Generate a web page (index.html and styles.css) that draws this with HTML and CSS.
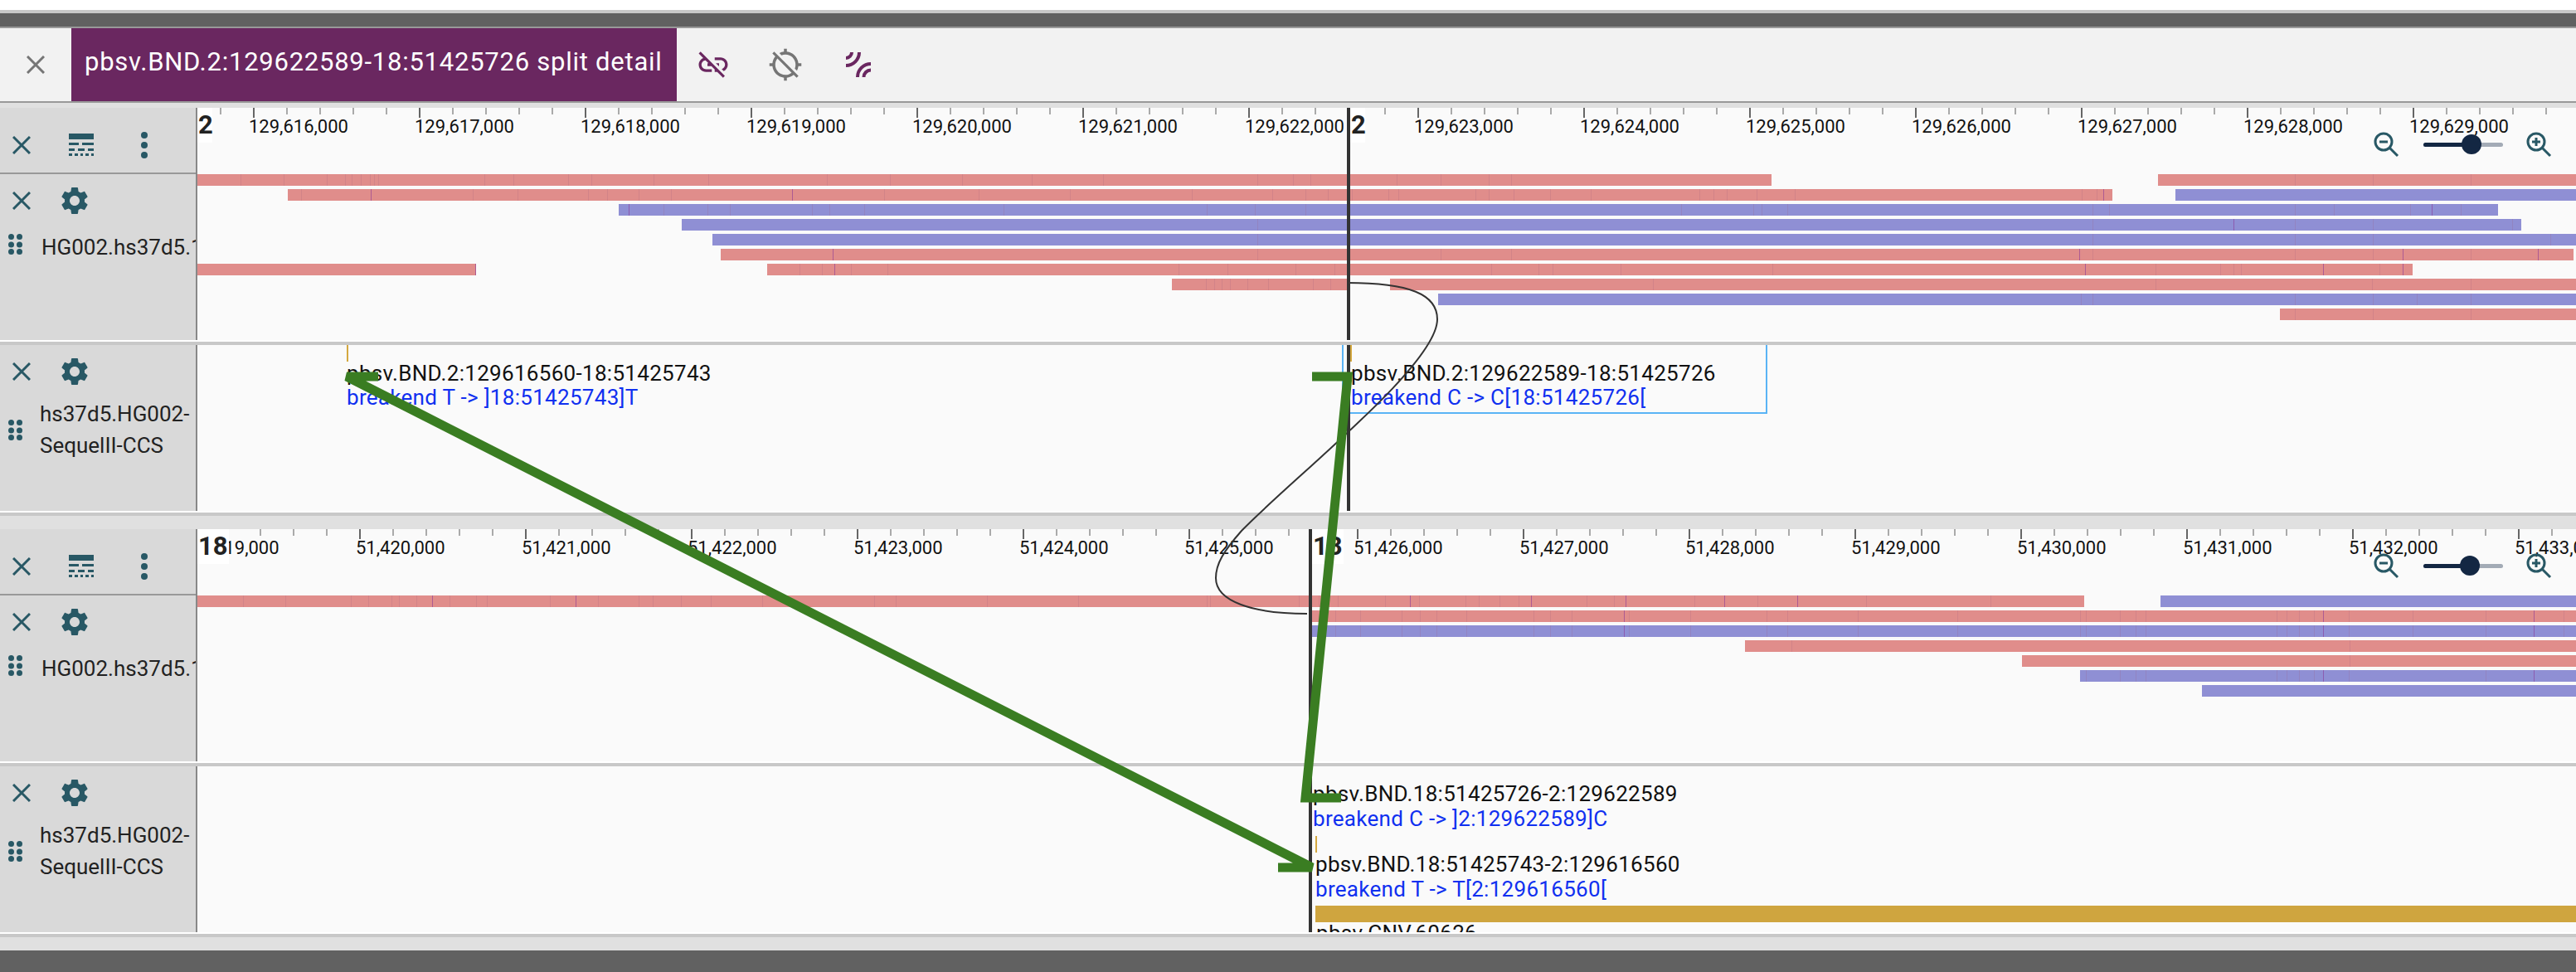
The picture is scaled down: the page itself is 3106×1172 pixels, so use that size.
FILE: index.html
```html
<!DOCTYPE html>
<html lang="en">
<head>
<meta charset="utf-8">
<title>pbsv.BND split detail</title>
<link rel="stylesheet" href="styles.css">
</head>
<body>
<div class="page">
  <div class="topbar"></div>
  <header class="tabbar">
    <button class="tab-close"><svg class="ico-close" viewBox="0 0 22 22"><path d="M1 1l20 20M21 1L1 21"/></svg></button>
    <div class="tab-title">pbsv.BND.2:129622589-18:51425726 split detail</div>
    <svg class="tab-ico tab-link" viewBox="0 0 24 24"><path d="M17 7h-4v1.9h4c1.71 0 3.1 1.39 3.1 3.1 0 1.43-.98 2.63-2.31 2.98l1.46 1.46C20.88 15.61 22 13.95 22 12c0-2.76-2.24-5-5-5zm-1 4h-2.19l2 2H16zM2 4.27l3.11 3.11C3.29 8.12 2 9.91 2 12c0 2.76 2.24 5 5 5h4v-1.9H7c-1.71 0-3.1-1.39-3.1-3.1 0-1.59 1.21-2.9 2.76-3.07L8.73 11H8v2h2.73L13 15.27V17h1.73l4.01 4L20 19.74 3.27 3 2 4.27z"/></svg>
    <svg class="tab-ico tab-gps" viewBox="0 0 24 24"><path d="M20.94 11c-.46-4.17-3.77-7.48-7.94-7.94V1h-2v2.06c-1.13.12-2.19.46-3.16.97l1.5 1.5C10.16 5.19 11.06 5 12 5c3.87 0 7 3.13 7 7 0 .94-.19 1.84-.52 2.65l1.5 1.5c.5-.96.84-2.02.97-3.15H23v-2h-2.06zM3 4.27l2.04 2.04C3.97 7.62 3.26 9.23 3.06 11H1v2h2.06c.46 4.17 3.77 7.48 7.94 7.94V23h2v-2.06c1.77-.2 3.38-.91 4.69-1.98L19.73 21 21 19.73 4.27 3 3 4.27zm13.27 13.27C15.09 18.45 13.61 19 12 19c-3.87 0-7-3.13-7-7 0-1.61.55-3.09 1.46-4.27l9.81 9.81z"/></svg>
    <svg class="tab-arcs" viewBox="0 0 30 30"><path d="M0 7A7 7 0 0 0 7 0M0 16A16 16 0 0 0 16 0M30 14A16 16 0 0 0 14 30M30 21.500A8.500 8.500 0 0 0 21.500 30"/></svg>
  </header>
  <div class="rule-dim"></div>

  <!-- view 1 : alignments -->
  <section class="track track-align">
    <div class="panel">
      <div class="panel-head">
        <svg class="ico-x" viewBox="0 0 22 22"><path d="M1 1l20 20M21 1L1 21"/></svg>
        <svg class="ico-table" viewBox="0 0 30 28"><path d="M0 0h30v7H0zM0 11h12v3H0zM16 11h14v3H16zM0 18h7v3H0zM11 18h8v3h-8zM23 18h7v3h-7zM0 24h4v3H0zM7 24h4v3H7zM14 24h3v3h-3zM20 24h4v3h-4zM27 24h3v3h-3z"/></svg>
        <svg class="ico-more" viewBox="0 0 8 32"><circle cx="4" cy="4" r="4"/><circle cx="4" cy="16" r="4"/><circle cx="4" cy="28" r="4"/></svg>
      </div>
      <div class="panel-tools">
        <svg class="ico-x" viewBox="0 0 22 22"><path d="M1 1l20 20M21 1L1 21"/></svg>
        <svg class="ico-gear" viewBox="0 0 24 24"><path d="M19.14 12.94c.04-.3.06-.61.06-.94 0-.32-.02-.64-.07-.94l2.03-1.58c.18-.14.23-.41.12-.61l-1.92-3.32c-.12-.22-.37-.29-.59-.22l-2.39.96c-.5-.38-1.03-.7-1.62-.94l-.36-2.54c-.04-.24-.24-.41-.48-.41h-3.84c-.24 0-.43.17-.47.41l-.36 2.54c-.59.24-1.13.57-1.62.94l-2.39-.96c-.22-.08-.47 0-.59.22L2.74 8.87c-.12.21-.08.47.12.61l2.03 1.58c-.05.3-.09.63-.09.94s.02.64.07.94l-2.03 1.58c-.18.14-.23.41-.12.61l1.92 3.32c.12.22.37.29.59.22l2.39-.96c.5.38 1.03.7 1.62.94l.36 2.54c.05.24.24.41.48.41h3.84c.24 0 .44-.17.47-.41l.36-2.54c.59-.24 1.13-.56 1.62-.94l2.39.96c.22.08.47 0 .59-.22l1.92-3.32c.12-.22.07-.47-.12-.61l-2.01-1.58zM12 15.6c-1.98 0-3.6-1.62-3.6-3.6s1.62-3.6 3.6-3.6 3.6 1.62 3.6 3.6-1.62 3.6-3.6 3.6z"/></svg>
      </div>
      <div class="panel-label label-single">
        <svg class="ico-drag" viewBox="0 0 17 25"><circle cx="3.500" cy="3.500" r="3.500"/><circle cx="13.500" cy="3.500" r="3.500"/><circle cx="3.500" cy="13" r="3.500"/><circle cx="13.500" cy="13" r="3.500"/><circle cx="3.500" cy="21.500" r="3.500"/><circle cx="13.500" cy="21.500" r="3.500"/></svg>
        <span class="label-clip">HG002.hs37d5.11kb.bam</span>
      </div>
    </div>
    <svg class="canvas" viewBox="238 130 2868 280">
      <defs>
        <pattern id="a-min-l" patternUnits="userSpaceOnUse" x="265" y="130" width="40" height="8"><rect width="2" height="8" class="tick-min"/></pattern>
        <pattern id="a-maj-l" patternUnits="userSpaceOnUse" x="305" y="130" width="200" height="12"><rect width="2" height="12" class="tick-maj"/></pattern>
        <pattern id="a-min-r" patternUnits="userSpaceOnUse" x="1669" y="130" width="40" height="8"><rect width="2" height="8" class="tick-min"/></pattern>
        <pattern id="a-maj-r" patternUnits="userSpaceOnUse" x="1709" y="130" width="200" height="12"><rect width="2" height="12" class="tick-maj"/></pattern>
      </defs>
      <rect x="238" y="130" width="1386" height="8" fill="url(#a-min-l)"/>
      <rect x="238" y="130" width="1386" height="12" fill="url(#a-maj-l)"/>
      <rect x="1646" y="130" width="1460" height="8" fill="url(#a-min-r)"/>
      <rect x="1646" y="130" width="1460" height="12" fill="url(#a-maj-r)"/>
      <g class="ruler-text">
        <text x="300" y="160">129,616,000</text><text x="500" y="160">129,617,000</text><text x="700" y="160">129,618,000</text><text x="900" y="160">129,619,000</text><text x="1100" y="160">129,620,000</text><text x="1300" y="160">129,621,000</text><text x="1501" y="160">129,622,000</text>
        <text x="1705" y="160">129,623,000</text><text x="1905" y="160">129,624,000</text><text x="2105" y="160">129,625,000</text><text x="2305" y="160">129,626,000</text><text x="2505" y="160">129,627,000</text><text x="2705" y="160">129,628,000</text><text x="2905" y="160">129,629,000</text>
      </g>
      <rect class="chr-box" x="238" y="130" width="18" height="42"/><text class="chr" x="239" y="161">2</text>
      <rect class="chr-box" x="1627" y="130" width="19" height="42"/><text class="chr" x="1629" y="161">2</text>

      <g class="pink">
        <rect x="238" y="210" width="1898" height="14"/><rect x="2602" y="210" width="504" height="14"/>
        <rect x="347" y="228" width="2200" height="14"/>
        <rect x="869" y="300" width="2234" height="14"/>
        <rect x="238" y="318" width="336" height="14"/><rect x="925" y="318" width="1984" height="14"/>
        <rect x="1413" y="336" width="211" height="14"/><rect x="1676" y="336" width="1430" height="14"/>
        <rect x="2749" y="372" width="357" height="14"/>
      </g>
      <g class="blue">
        <rect x="2623" y="228" width="483" height="14"/>
        <rect x="746" y="246" width="2266" height="14"/>
        <rect x="822" y="264" width="2218" height="14"/>
        <rect x="859" y="282" width="2247" height="14"/>
        <rect x="1734" y="354" width="1372" height="14"/>
      </g>
      <path class="mark" d="M290 210v14M342 210v14M394 210v14M416 210v14M424 210v14M435 210v14M446 210v14M451 210v14M456 210v14M584 210v14M619 210v14M685 210v14M713 210v14M788 210v14M854 210v14M997 210v14M1073 210v14M1160 210v14M1244 210v14M1330 210v14M1516 210v14M1559 210v14M1580 210v14M1684 210v14M1737 210v14M1795 210v14M1822 210v14M2767 210v14M2861 210v14M2979 210v14
      M363 228v14M570 228v14M624 228v14M709 228v14M732 228v14M770 228v14M809 228v14M1066 228v14M1180 228v14M1290 228v14M1437 228v14M1534 228v14M1574 228v14M1601 228v14M1630 228v14M1674 228v14M1686 228v14M1779 228v14M1795 228v14M1825 228v14M1869 228v14M1918 228v14M2049 228v14M2066 228v14M2082 228v14M2118 228v14M2164 228v14M2510 228v14M2528 228v14
      M800 246v14M853 246v14M880 246v14M979 246v14M1000 246v14M1042 246v14M1210 246v14M1455 246v14M1513 246v14M1574 246v14M2027 246v14M2114 246v14M2124 246v14M2155 246v14M2523 246v14M2543 246v14M2767 246v14M2814 246v14M2906 246v14M2967 246v14
      M1516 264v14M2523 264v14M2767 264v14M2861 264v14M3029 264v14
      M1516 282v14M2523 282v14M2767 282v14M2861 282v14M3075 282v14
      M1516 300v14M1737 300v14M1822 300v14M2523 300v14M2767 300v14M2861 300v14M2979 300v14
      M964 318v14M991 318v14M1026 318v14M1070 318v14M1421 318v14M1480 318v14M1562 318v14M1609 318v14M1798 318v14M1855 318v14M1872 318v14M1954 318v14M2137 318v14M2599 318v14M2677 318v14M2693 318v14M2702 318v14M2869 318v14
      M1454 336v14M1464 336v14M1473 336v14M1483 336v14M1504 336v14M1529 336v14M1583 336v14M1604 336v14M1993 336v14M2599 336v14M2860 336v14M2979 336v14
      M2509 354v14M2523 354v14M2767 354v14M2861 354v14M2914 354v14M2979 354v14
      M2767 372v14M2861 372v14M2979 372v14"/>
      <path class="mark-strong" d="M447 228v14M955 228v14M2536 228v14
      M758 246v14M2932 246v14
      M2693 264v14
      M1004 300v14M2507 300v14M2897 300v14M3060 300v14
      M573 318v14M1006 318v14M2514 318v14M2801 318v14M2897 318v14"/>
      <rect class="viewline" x="1624" y="130" width="4" height="280"/>
      <g class="zoom">
        <circle class="lens" cx="2874" cy="171" r="10"/><path class="lens" d="M2881 178l10 10M2869 171h10"/>
        <circle class="lens" cx="3058" cy="171" r="10"/><path class="lens" d="M3065 178l10 10M3053 171h10M3058 166v10"/>
        <rect class="slider-rest" x="2922" y="172" width="96" height="5" rx="2.500"/><rect class="slider-fill" x="2922" y="172" width="58" height="5" rx="2.500"/>
        <ellipse class="slider-thumb" cx="2980" cy="174" rx="12" ry="12"/>
      </g>
    </svg>
  </section>
  <div class="sep"></div>

  <section class="track track-feat">
    <div class="panel">
      <div class="panel-tools">
        <svg class="ico-x" viewBox="0 0 22 22"><path d="M1 1l20 20M21 1L1 21"/></svg>
        <svg class="ico-gear" viewBox="0 0 24 24"><path d="M19.14 12.94c.04-.3.06-.61.06-.94 0-.32-.02-.64-.07-.94l2.03-1.58c.18-.14.23-.41.12-.61l-1.92-3.32c-.12-.22-.37-.29-.59-.22l-2.39.96c-.5-.38-1.03-.7-1.62-.94l-.36-2.54c-.04-.24-.24-.41-.48-.41h-3.84c-.24 0-.43.17-.47.41l-.36 2.54c-.59.24-1.13.57-1.62.94l-2.39-.96c-.22-.08-.47 0-.59.22L2.74 8.87c-.12.21-.08.47.12.61l2.03 1.58c-.05.3-.09.63-.09.94s.02.64.07.94l-2.03 1.58c-.18.14-.23.41-.12.61l1.92 3.32c.12.22.37.29.59.22l2.39-.96c.5.38 1.03.7 1.62.94l.36 2.54c.05.24.24.41.48.41h3.84c.24 0 .44-.17.47-.41l.36-2.54c.59-.24 1.13-.56 1.62-.94l2.39.96c.22.08.47 0 .59-.22l1.92-3.32c.12-.22.07-.47-.12-.61l-2.01-1.58zM12 15.6c-1.98 0-3.6-1.62-3.6-3.6s1.62-3.6 3.6-3.6 3.6 1.62 3.6 3.6-1.62 3.6-3.6 3.6z"/></svg>
      </div>
      <div class="panel-label label-double">
        <svg class="ico-drag" viewBox="0 0 17 25"><circle cx="3.500" cy="3.500" r="3.500"/><circle cx="13.500" cy="3.500" r="3.500"/><circle cx="3.500" cy="13" r="3.500"/><circle cx="13.500" cy="13" r="3.500"/><circle cx="3.500" cy="21.500" r="3.500"/><circle cx="13.500" cy="21.500" r="3.500"/></svg>
        <span class="label-wrap">hs37d5.HG002-<br>SequelII-CCS</span>
      </div>
    </div>
    <svg class="canvas" viewBox="238 416 2868 200">
      <rect class="feat-box" x="1619" y="400" width="511" height="98"/>
      <rect class="feat-tick" x="418" y="416" width="2" height="20"/>
      <rect class="feat-tick" x="1628" y="416" width="2" height="20"/>
      <text class="feat-name" x="418" y="459">pbsv.BND.2:129616560-18:51425743</text>
      <text class="feat-desc" x="418" y="488">breakend T -&gt; ]18:51425743]T</text>
      <text class="feat-name" x="1629" y="459">pbsv.BND.2:129622589-18:51425726</text>
      <text class="feat-desc" x="1629" y="488">breakend C -&gt; C[18:51425726[</text>
      <rect class="viewline" x="1624" y="416" width="4" height="200"/>
    </svg>
  </section>
  <div class="sep"></div>
  <div class="band"></div>

  <!-- view 2 : alignments -->
  <section class="track track-align">
    <div class="panel">
      <div class="panel-head">
        <svg class="ico-x" viewBox="0 0 22 22"><path d="M1 1l20 20M21 1L1 21"/></svg>
        <svg class="ico-table" viewBox="0 0 30 28"><path d="M0 0h30v7H0zM0 11h12v3H0zM16 11h14v3H16zM0 18h7v3H0zM11 18h8v3h-8zM23 18h7v3h-7zM0 24h4v3H0zM7 24h4v3H7zM14 24h3v3h-3zM20 24h4v3h-4zM27 24h3v3h-3z"/></svg>
        <svg class="ico-more" viewBox="0 0 8 32"><circle cx="4" cy="4" r="4"/><circle cx="4" cy="16" r="4"/><circle cx="4" cy="28" r="4"/></svg>
      </div>
      <div class="panel-tools">
        <svg class="ico-x" viewBox="0 0 22 22"><path d="M1 1l20 20M21 1L1 21"/></svg>
        <svg class="ico-gear" viewBox="0 0 24 24"><path d="M19.14 12.94c.04-.3.06-.61.06-.94 0-.32-.02-.64-.07-.94l2.03-1.58c.18-.14.23-.41.12-.61l-1.92-3.32c-.12-.22-.37-.29-.59-.22l-2.39.96c-.5-.38-1.03-.7-1.62-.94l-.36-2.54c-.04-.24-.24-.41-.48-.41h-3.84c-.24 0-.43.17-.47.41l-.36 2.54c-.59.24-1.13.57-1.62.94l-2.39-.96c-.22-.08-.47 0-.59.22L2.74 8.87c-.12.21-.08.47.12.61l2.03 1.58c-.05.3-.09.63-.09.94s.02.64.07.94l-2.03 1.58c-.18.14-.23.41-.12.61l1.92 3.32c.12.22.37.29.59.22l2.39-.96c.5.38 1.03.7 1.62.94l.36 2.54c.05.24.24.41.48.41h3.84c.24 0 .44-.17.47-.41l.36-2.54c.59-.24 1.13-.56 1.62-.94l2.39.96c.22.08.47 0 .59-.22l1.92-3.32c.12-.22.07-.47-.12-.61l-2.01-1.58zM12 15.6c-1.98 0-3.6-1.62-3.6-3.6s1.62-3.6 3.6-3.6 3.6 1.62 3.6 3.6-1.62 3.6-3.6 3.6z"/></svg>
      </div>
      <div class="panel-label label-single">
        <svg class="ico-drag" viewBox="0 0 17 25"><circle cx="3.500" cy="3.500" r="3.500"/><circle cx="13.500" cy="3.500" r="3.500"/><circle cx="3.500" cy="13" r="3.500"/><circle cx="13.500" cy="13" r="3.500"/><circle cx="3.500" cy="21.500" r="3.500"/><circle cx="13.500" cy="21.500" r="3.500"/></svg>
        <span class="label-clip">HG002.hs37d5.11kb.bam</span>
      </div>
    </div>
    <svg class="canvas" viewBox="238 638 2868 280">
      <defs>
        <pattern id="b-min-l" patternUnits="userSpaceOnUse" x="313" y="638" width="40" height="8"><rect width="2" height="8" class="tick-min"/></pattern>
        <pattern id="b-maj-l" patternUnits="userSpaceOnUse" x="433" y="638" width="200" height="12"><rect width="2" height="12" class="tick-maj"/></pattern>
        <pattern id="b-min-r" patternUnits="userSpaceOnUse" x="1636" y="638" width="40" height="8"><rect width="2" height="8" class="tick-min"/></pattern>
        <pattern id="b-maj-r" patternUnits="userSpaceOnUse" x="1636" y="638" width="200" height="12"><rect width="2" height="12" class="tick-maj"/></pattern>
      </defs>
      <rect x="238" y="638" width="1342" height="8" fill="url(#b-min-l)"/>
      <rect x="238" y="638" width="1342" height="12" fill="url(#b-maj-l)"/>
      <rect x="1620" y="638" width="1486" height="8" fill="url(#b-min-r)"/>
      <rect x="1620" y="638" width="1486" height="12" fill="url(#b-maj-r)"/>
      <g class="ruler-text">
        <text x="229" y="668">51,419,000</text><text x="429" y="668">51,420,000</text><text x="629" y="668">51,421,000</text><text x="829" y="668">51,422,000</text><text x="1029" y="668">51,423,000</text><text x="1229" y="668">51,424,000</text><text x="1428" y="668">51,425,000</text>
        <text x="1632" y="668">51,426,000</text><text x="1832" y="668">51,427,000</text><text x="2032" y="668">51,428,000</text><text x="2232" y="668">51,429,000</text><text x="2432" y="668">51,430,000</text><text x="2632" y="668">51,431,000</text><text x="2832" y="668">51,432,000</text><text x="3032" y="668">51,433,000</text>
      </g>
      <rect class="chr-box" x="238" y="638" width="38" height="42"/><text class="chr" x="239" y="669">18</text>
      <rect class="chr-box" x="1582" y="638" width="38" height="42"/><text class="chr" x="1583" y="669">18</text>

      <g class="pink">
        <rect x="238" y="718" width="2275" height="14"/>
        <rect x="1582" y="736" width="1524" height="14"/>
        <rect x="2104" y="772" width="1002" height="14"/>
        <rect x="2438" y="790" width="668" height="14"/>
      </g>
      <g class="blue">
        <rect x="2605" y="718" width="501" height="14"/>
        <rect x="1582" y="754" width="1524" height="14"/>
        <rect x="2508" y="808" width="598" height="14"/>
        <rect x="2655" y="826" width="451" height="14"/>
      </g>
      <path class="mark" d="M293 718v14M344 718v14M423 718v14M444 718v14M472 718v14M481 718v14M502 718v14M542 718v14M574 718v14M587 718v14M663 718v14M721 718v14M770 718v14M787 718v14M821 718v14M857 718v14M919 718v14M1054 718v14M1080 718v14M1190 718v14M1300 718v14M1455 718v14M1459 718v14M1566 718v14M1590 718v14M1613 718v14M1670 718v14M1711 718v14M1767 718v14M1783 718v14M1808 718v14M1831 718v14M1913 718v14M1946 718v14M2043 718v14M2119 718v14M2250 718v14M2400 718v14
      M1610 736v14M1640 736v14M1690 736v14M1712 736v14M1732 736v14M1768 736v14M1849 736v14M1869 736v14M1895 736v14M1964 736v14M2038 736v14M2130 736v14M2155 736v14M2240 736v14M2360 736v14M2508 736v14M2515 736v14M2556 736v14M2575 736v14M2587 736v14M2745 736v14M2757 736v14M2772 736v14M2790 736v14M2832 736v14M2909 736v14M2997 736v14M3091 736v14
      M1610 754v14M1640 754v14M1690 754v14M1712 754v14M1732 754v14M1768 754v14M1849 754v14M1869 754v14M1895 754v14M1964 754v14M2038 754v14M2130 754v14M2155 754v14M2240 754v14M2360 754v14M2508 754v14M2515 754v14M2556 754v14M2575 754v14M2587 754v14M2745 754v14M2757 754v14M2772 754v14M2790 754v14M2832 754v14M2909 754v14M2997 754v14M3091 754v14
      M2160 772v14M2833 772v14M2833 790v14
      M2515 808v14M2556 808v14M2575 808v14M2587 808v14M2745 808v14M2757 808v14M2772 808v14M2790 808v14M2832 808v14M2997 808v14"/>
      <path class="mark-strong" d="M521 718v14M694 718v14M1700 718v14M1846 718v14M1960 718v14M2079 718v14M2167 718v14
      M1958 736v14M2801 736v14M3055 736v14
      M1958 754v14M2801 754v14M3055 754v14
      M2801 808v14M3055 808v14"/>
      <rect class="viewline" x="1578" y="638" width="4" height="280"/>
      <g class="zoom">
        <circle class="lens" cx="2874" cy="679" r="10"/><path class="lens" d="M2881 686l10 10M2869 679h10"/>
        <circle class="lens" cx="3058" cy="679" r="10"/><path class="lens" d="M3065 686l10 10M3053 679h10M3058 674v10"/>
        <rect class="slider-rest" x="2922" y="680" width="96" height="5" rx="2.500"/><rect class="slider-fill" x="2922" y="680" width="56" height="5" rx="2.500"/>
        <ellipse class="slider-thumb" cx="2978" cy="682" rx="12" ry="12"/>
      </g>
    </svg>
  </section>
  <div class="sep"></div>

  <section class="track track-feat">
    <div class="panel">
      <div class="panel-tools">
        <svg class="ico-x" viewBox="0 0 22 22"><path d="M1 1l20 20M21 1L1 21"/></svg>
        <svg class="ico-gear" viewBox="0 0 24 24"><path d="M19.14 12.94c.04-.3.06-.61.06-.94 0-.32-.02-.64-.07-.94l2.03-1.58c.18-.14.23-.41.12-.61l-1.92-3.32c-.12-.22-.37-.29-.59-.22l-2.39.96c-.5-.38-1.03-.7-1.62-.94l-.36-2.54c-.04-.24-.24-.41-.48-.41h-3.84c-.24 0-.43.17-.47.41l-.36 2.54c-.59.24-1.13.57-1.62.94l-2.39-.96c-.22-.08-.47 0-.59.22L2.74 8.87c-.12.21-.08.47.12.61l2.03 1.58c-.05.3-.09.63-.09.94s.02.64.07.94l-2.03 1.58c-.18.14-.23.41-.12.61l1.92 3.32c.12.22.37.29.59.22l2.39-.96c.5.38 1.03.7 1.62.94l.36 2.54c.05.24.24.41.48.41h3.84c.24 0 .44-.17.47-.41l.36-2.54c.59-.24 1.13-.56 1.62-.94l2.39.96c.22.08.47 0 .59-.22l1.92-3.32c.12-.22.07-.47-.12-.61l-2.01-1.58zM12 15.6c-1.98 0-3.6-1.62-3.6-3.6s1.62-3.6 3.6-3.6 3.6 1.62 3.6 3.6-1.62 3.6-3.6 3.6z"/></svg>
      </div>
      <div class="panel-label label-double">
        <svg class="ico-drag" viewBox="0 0 17 25"><circle cx="3.500" cy="3.500" r="3.500"/><circle cx="13.500" cy="3.500" r="3.500"/><circle cx="3.500" cy="13" r="3.500"/><circle cx="13.500" cy="13" r="3.500"/><circle cx="3.500" cy="21.500" r="3.500"/><circle cx="13.500" cy="21.500" r="3.500"/></svg>
        <span class="label-wrap">hs37d5.HG002-<br>SequelII-CCS</span>
      </div>
    </div>
    <svg class="canvas" viewBox="238 924 2868 200">
      <text class="feat-name" x="1583" y="966">pbsv.BND.18:51425726-2:129622589</text>
      <text class="feat-desc" x="1583" y="996">breakend C -&gt; ]2:129622589]C</text>
      <rect class="feat-tick" x="1586" y="1008" width="2" height="20"/>
      <text class="feat-name" x="1586" y="1051">pbsv.BND.18:51425743-2:129616560</text>
      <text class="feat-desc" x="1586" y="1081">breakend T -&gt; T[2:129616560[</text>
      <rect class="feat-bar" x="1586" y="1092" width="1520" height="20"/>
      <text class="feat-name" x="1587" y="1134">pbsv.CNV.60626</text>
      <rect class="viewline" x="1578" y="924" width="4" height="200"/>
    </svg>
  </section>
  <div class="sep"></div>
  <div class="band band-bottom"></div>
  <div class="bottombar"></div>

  <!-- breakpoint connections drawn over both views -->
  <svg class="overlay" viewBox="0 0 3106 1172">
    <path class="splice" d="M1624 341C1700 341 1733 355 1733 385C1733 440 1560 575 1497 640C1475 665 1466 680 1466 697C1466 725 1510 740 1576 740"/>
    <path class="link" d="M456 454H418L1582 1046H1541"/>
    <path class="link" d="M1582 454H1625L1574 962H1617"/>
  </svg>
</div>
</body>
</html>
```

FILE: styles.css
```css
html, body {
  margin: 0;
  padding: 0;
  background: #fff;
}
.page {
  position: relative;
  width: 3106px;
  height: 1172px;
  overflow: hidden;
  padding-top: 12px;
  box-sizing: border-box;
  font-family: Roboto, "Liberation Sans", sans-serif;
  color: #222;
}
.topbar {
  height: 16px;
  background: #616161;
  border-top: 4px solid #c8c8c8;
  border-bottom: 2px solid #999;
}
.tabbar {
  display: flex;
  align-items: center;
  height: 88px;
  background: #f2f2f2;
  border-bottom: 2px solid #999;
}
.tab-close {
  display: flex;
  align-items: center;
  justify-content: center;
  width: 86px;
  height: 88px;
  padding: 0;
  border: 0;
  background: none;
}
.ico-close {
  width: 22px;
  height: 22px;
  fill: none;
  stroke: #757575;
  stroke-width: 3;
}
.tab-title {
  display: flex;
  align-items: center;
  box-sizing: border-box;
  width: 730px;
  height: 88px;
  padding: 0 0 8px 16px;
  background: #6a2760;
  color: #fff;
  font-size: 31px;
  letter-spacing: 0.75px;
  white-space: nowrap;
}
.tab-ico {
  width: 42px;
  height: 42px;
}
.tab-link {
  margin-left: 23px;
  fill: #6a2760;
}
.tab-gps {
  margin-left: 45px;
  fill: #757575;
}
.tab-arcs {
  width: 30px;
  height: 30px;
  margin-left: 52px;
  fill: none;
  stroke: #6a2760;
  stroke-width: 4;
}
.rule-dim {
  height: 6px;
  background: #e0e0e0;
}
.track {
  display: flex;
  margin-bottom: 2px;
}
.track-align {
  height: 280px;
}
.track-feat {
  height: 200px;
}
.panel {
  flex: none;
  box-sizing: border-box;
  width: 238px;
  background: #d9d9d9;
  border-right: 2px solid #888;
}
.panel-head {
  display: flex;
  align-items: center;
  box-sizing: border-box;
  height: 80px;
  padding: 11px 0 0 15px;
  border-bottom: 2px solid #999;
}
.panel-tools {
  display: flex;
  align-items: center;
  height: 64px;
  padding-left: 15px;
}
.ico-x {
  width: 22px;
  height: 22px;
  fill: none;
  stroke: #285865;
  stroke-width: 3;
}
.ico-table {
  width: 30px;
  height: 28px;
  margin-left: 46px;
  fill: #285865;
}
.ico-more {
  width: 8px;
  height: 32px;
  margin-left: 57px;
  fill: #285865;
}
.ico-gear {
  width: 40px;
  height: 40px;
  margin-left: 33px;
  fill: #285865;
}
.panel-label {
  display: flex;
  padding-left: 10px;
  font-size: 26px;
  line-height: 38px;
}
.label-single {
  align-items: flex-start;
  padding-top: 8px;
}
.label-double {
  align-items: center;
  height: 76px;
}
.ico-drag {
  flex: none;
  width: 17px;
  height: 25px;
  fill: #285865;
}
.label-clip {
  width: 186px;
  margin-left: 23px;
  margin-top: -3px;
  overflow: hidden;
  white-space: nowrap;
}
.label-wrap {
  margin-left: 21px;
  white-space: nowrap;
}
.canvas {
  display: block;
  flex: none;
  width: 2868px;
  height: 100%;
  background: #fafafa;
  overflow: hidden;
}
.tick-min { fill: #aaa; }
.tick-maj { fill: #666; }
.ruler-text text {
  font-family: Roboto, "Liberation Sans", sans-serif;
  font-size: 22px;
  fill: #111;
}
.chr-box { fill: #fff; }
.chr {
  font-family: Roboto, "Liberation Sans", sans-serif;
  font-size: 31px;
  font-weight: 700;
  fill: #222;
}
.pink { fill: #e08d8b; }
.blue { fill: #8f8fd4; }
.mark {
  fill: none;
  stroke: #a0607e;
  stroke-opacity: 0.22;
  stroke-width: 1;
  transform: translateX(0.5px);
}
.mark-strong {
  fill: none;
  stroke: #8a3a98;
  stroke-opacity: 0.6;
  stroke-width: 1;
  transform: translateX(0.5px);
}
.viewline { fill: #333; }
.lens {
  fill: none;
  stroke: #285865;
  stroke-width: 3;
}
.slider-rest { fill: #a3abb6; }
.slider-fill { fill: #132743; }
.slider-thumb { fill: #132743; }
.feat-box {
  fill: none;
  stroke: #5ab4f5;
  stroke-width: 2;
}
.feat-tick { fill: #d4a83f; }
.feat-bar { fill: #cfa53f; }
.feat-name {
  font-family: Roboto, "Liberation Sans", sans-serif;
  font-size: 26px;
  letter-spacing: 0.3px;
  fill: #111;
}
.feat-desc {
  font-family: Roboto, "Liberation Sans", sans-serif;
  font-size: 26px;
  letter-spacing: 0.3px;
  fill: #1030f0;
}
.sep {
  height: 4px;
  background: #c8c8c8;
}
.band {
  height: 16px;
  background: #e0e0e0;
}
.bottombar {
  height: 26px;
  background: #616161;
}
.overlay {
  position: absolute;
  left: 0;
  top: 0;
  width: 3106px;
  height: 1172px;
  pointer-events: none;
}
.splice {
  fill: none;
  stroke: #333;
  stroke-width: 2;
}
.link {
  fill: none;
  stroke: #3a7d22;
  stroke-width: 11;
}
```
